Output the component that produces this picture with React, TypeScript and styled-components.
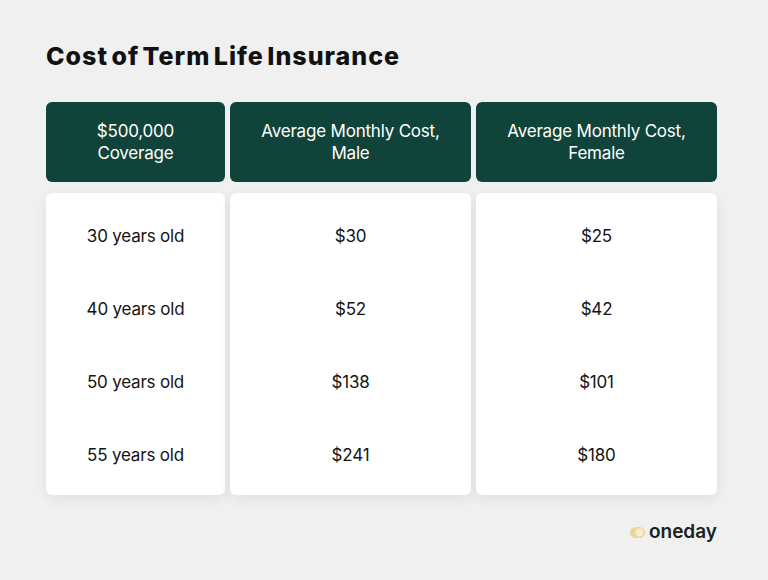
import React from 'react'
import styled, {createGlobalStyle} from 'styled-components'

const GlobalStyle = createGlobalStyle`
  html, body {
    margin: 0;
    padding: 0;
    background: #f0f0f0;
  }
  body {
    font-family: Inter, 'Liberation Sans', sans-serif;
    -webkit-font-smoothing: antialiased;
  }
`

interface Row {
  age: string
  male: string
  female: string
}

const ROWS: Row[] = [
  {age: '30 years old', male: '$30', female: '$25'},
  {age: '40 years old', male: '$52', female: '$42'},
  {age: '50 years old', male: '$138', female: '$101'},
  {age: '55 years old', male: '$241', female: '$180'},
]

const Page = styled.div`
  width: 768px;
  height: 580px;
  box-sizing: border-box;
  padding: 40px 51px 0 46px;
  display: flex;
  flex-direction: column;
`

const Title = styled.h1`
  margin: 0;
  height: 32px;
  font-size: 25px;
  font-weight: 800;
  letter-spacing: 1px;
  word-spacing: -3px;
  color: #111;
  line-height: 32px;
`

const Table = styled.div`
  margin-top: 30px;
  display: grid;
  grid-template-columns: 179px 241px 241px;
  column-gap: 5px;
  row-gap: 11px;
`

const HeaderCell = styled.div`
  height: 80px;
  border-radius: 6px;
  background: #10443a;
  color: #fff;
  display: flex;
  align-items: center;
  justify-content: center;
  text-align: center;
  font-size: 17px;
  line-height: 22px;
  letter-spacing: -0.2px;
  padding: 0 10px;
`

const Card = styled.div`
  height: 302px;
  box-sizing: border-box;
  padding: 6px 0 4px;
  border-radius: 6px;
  background: #fff;
  box-shadow: 0 4px 14px rgba(0, 0, 0, 0.07);
  display: flex;
  flex-direction: column;
`

const Cell = styled.div`
  height: 73px;
  display: flex;
  align-items: center;
  justify-content: center;
  font-size: 17px;
  color: #141414;
  letter-spacing: -0.2px;
`

const Footer = styled.div`
  margin-top: 27px;
  display: flex;
  justify-content: flex-end;
  align-items: center;
  gap: 4px;
`

const Brand = styled.span`
  font-size: 19px;
  font-weight: 600;
  color: #17231f;
  letter-spacing: 0px;
  line-height: 20px;
`

function LogoMark() {
  return (
    <svg width="15" height="11" viewBox="0 0 15 11">
      <rect x="0" y="0" width="15" height="11" rx="5.5" fill="#ecd59a" />
      <circle cx="9.5" cy="5.5" r="4" fill="#f7ecd0" />
    </svg>
  )
}

export default function App() {
  const columns: Array<keyof Row> = ['age', 'male', 'female']
  return (
    <>
      <GlobalStyle />
      <Page>
        <Title>Cost of Term Life Insurance</Title>
        <Table>
          <HeaderCell>
            $500,000
            <br />
            Coverage
          </HeaderCell>
          <HeaderCell>
            Average Monthly Cost,
            <br />
            Male
          </HeaderCell>
          <HeaderCell>
            Average Monthly Cost,
            <br />
            Female
          </HeaderCell>
          {columns.map((key) => (
            <Card key={key}>
              {ROWS.map((row) => (
                <Cell key={row.age}>{row[key]}</Cell>
              ))}
            </Card>
          ))}
        </Table>
        <Footer>
          <LogoMark />
          <Brand>oneday</Brand>
        </Footer>
      </Page>
    </>
  )
}
